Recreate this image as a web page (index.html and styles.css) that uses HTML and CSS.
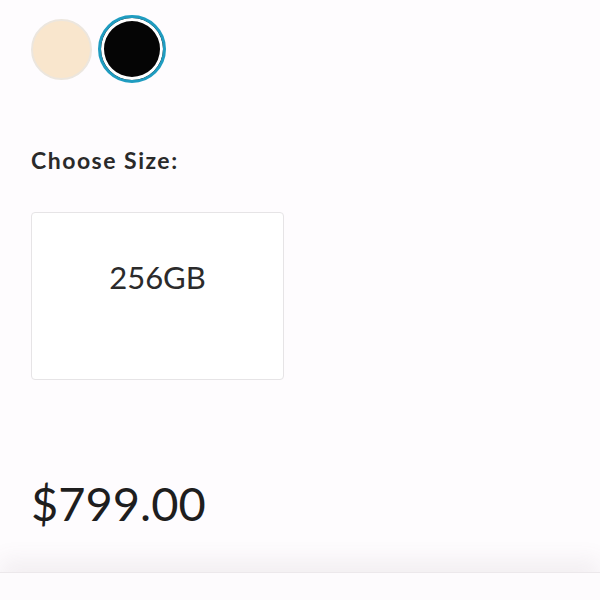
FILE: index.html
```html
<!DOCTYPE html>
<html>
<head>
  <title>Product Options</title>
  <link rel="stylesheet" href="styles.css">
</head>
<body>
  <div class="options">
    <div class="swatches">
      <span class="swatch cream"></span>
      <span class="swatch black selected"></span>
    </div>

    <h3 class="label">Choose Size:</h3>

    <div class="sizes">
      <div class="size">256GB</div>
    </div>

    <p class="price">$799.00</p>
  </div>
  <div class="bottom-bar"></div>
</body>
</html>
```

FILE: styles.css
```css
* {
  box-sizing: border-box;
  margin: 0;
  padding: 0;
}

html, body {
  height: 100%;
}

body {
  font-family: Lato, 'Noto Sans', sans-serif;
  background: #fefcfe;
  color: #222;
  overflow: hidden;
  position: relative;
}

.options {
  padding: 15px 0 0 31px;
}

.swatches {
  display: flex;
  align-items: center;
  gap: 6px;
  height: 68px;
}

.swatch {
  display: block;
  width: 61px;
  height: 61px;
  border-radius: 50%;
}

.swatch.cream {
  background: #f9e6cd;
  border: 2px solid #ece6de;
}

.swatch.black {
  background: #050505;
  width: 68px;
  height: 68px;
  border: 3px solid #1f9cc0;
  box-shadow: inset 0 0 0 3px #fff;
}

.label {
  margin-top: 63px;
  font-size: 23px;
  font-weight: 700;
  color: #2a2a2a;
  letter-spacing: 1.5px;
}

.sizes {
  margin-top: 38px;
  display: flex;
}

.size {
  width: 253px;
  height: 168px;
  border: 1px solid #e6e4e6;
  border-radius: 4px;
  background: #fff;
  text-align: center;
  padding-top: 45px;
  font-size: 31px;
  font-weight: 400;
  color: #2b2b2b;
}

.price {
  margin-top: 95px;
  font-size: 47px;
  font-weight: 400;
  color: #1e1e1e;
}

.bottom-bar {
  position: absolute;
  left: 0;
  right: 0;
  bottom: 0;
  height: 28px;
  background: #fdfbfd;
  border-top: 1px solid #ece8eb;
  box-shadow: 0 -12px 22px rgba(120, 100, 115, 0.09);
}
```
